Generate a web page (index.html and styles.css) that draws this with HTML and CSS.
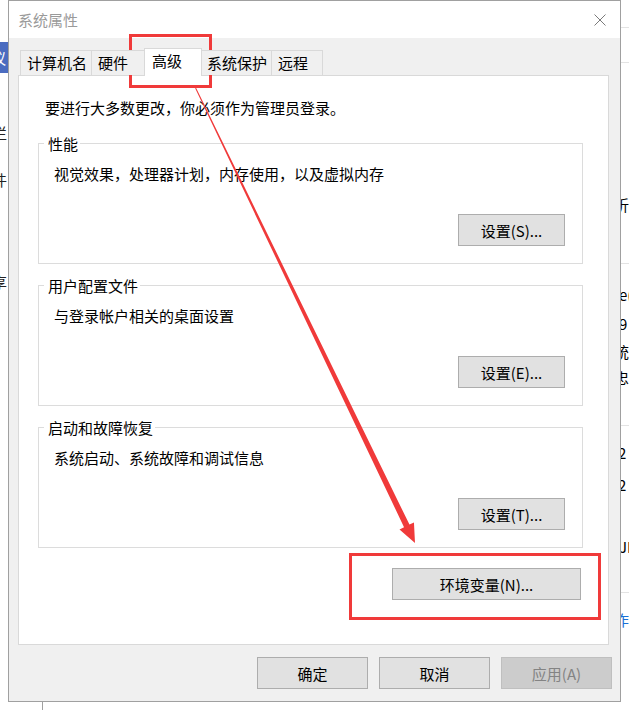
FILE: index.html
```html
<!DOCTYPE html>
<html lang="zh-CN">
<head>
    <meta charset="UTF-8">
    <title>系统属性</title>
    <link rel="stylesheet" href="styles.css">
</head>
<body>
<div class="screen">
    <div class="side side-left">
        <div class="bg-tab">议</div>
        <div class="bg-txt bg-1">栏</div>
        <div class="bg-txt bg-2">件</div>
        <div class="bg-txt bg-3">享</div>
    </div>

    <div class="dialog-col">
        <div class="dialog">
            <div class="titlebar">
                <span class="title">系统属性</span>
                <svg class="close" width="12" height="12" viewBox="0 0 12 12">
                    <path d="M0.5 0.5 L11.5 11.5 M11.5 0.5 L0.5 11.5" stroke="#7a7a7a" stroke-width="1" fill="none"/>
                </svg>
            </div>
            <div class="dlg-body">
                <div class="tabs">
                    <div class="tab tab-name">计算机名</div>
                    <div class="tab tab-hw">硬件</div>
                    <div class="tab active">高级</div>
                    <div class="tab tab-prot">系统保护</div>
                    <div class="tab tab-remote">远程</div>
                </div>
                <div class="panel">
                    <p class="note">要进行大多数更改，你必须作为管理员登录。</p>

                    <fieldset class="group">
                        <legend>性能</legend>
                        <p class="desc">视觉效果，处理器计划，内存使用，以及虚拟内存</p>
                        <div class="actions"><button class="btn">设置(S)...</button></div>
                    </fieldset>

                    <fieldset class="group">
                        <legend>用户配置文件</legend>
                        <p class="desc">与登录帐户相关的桌面设置</p>
                        <div class="actions"><button class="btn">设置(E)...</button></div>
                    </fieldset>

                    <fieldset class="group">
                        <legend>启动和故障恢复</legend>
                        <p class="desc">系统启动、系统故障和调试信息</p>
                        <div class="actions"><button class="btn">设置(T)...</button></div>
                    </fieldset>

                    <div class="env-row"><button class="btn btn-env">环境变量(N)...</button></div>
                </div>
                <div class="footer">
                    <button class="btn btn-foot">确定</button>
                    <button class="btn btn-foot">取消</button>
                    <button class="btn btn-foot" disabled>应用(A)</button>
                </div>
            </div>
        </div>
        <div class="below"></div>
    </div>

    <div class="side side-right">
        <div class="rl rl-1"></div>
        <div class="rl rl-2"></div>
        <div class="rt rt-1">折</div>
        <div class="rl rl-3"></div>
        <div class="rt rt-2">e(</div>
        <div class="rt rt-3">9</div>
        <div class="rt rt-4">统</div>
        <div class="rt rt-5">忠</div>
        <div class="rl rl-4"></div>
        <div class="rt rt-6">2</div>
        <div class="rt rt-7">2</div>
        <div class="rt rt-8">JI</div>
        <div class="rl rl-5"></div>
        <div class="rt rt-9">作</div>
    </div>
</div>

<!-- annotation marks drawn over the screenshot -->
<svg class="marks" width="629" height="710" viewBox="0 0 629 710">
    <rect x="130.5" y="35.5" width="80" height="51" fill="none" stroke="#f03a3a" stroke-width="3"/>
    <rect x="350.5" y="554.5" width="249" height="64" fill="none" stroke="#f03a3a" stroke-width="3"/>
    <polygon fill="#f03a3a" points="196.05,87.78 409.45,524.6 413.96,522.4 415,543 399.5,529.4 404.05,527.2 195.15,88.22"/>
</svg>
</body>
</html>
```

FILE: styles.css
```css
body{
    margin:0px;
    width:629px;
    height:710px;
    overflow:hidden;
    background-color:#ffffff;
    font-family:"Noto Sans CJK SC", "Noto Sans", sans-serif;
    font-size:15px;
    color:#000000;
    position:relative;
}
.screen{
    display:flex;
    align-items:flex-start;
    height:710px;
}

/* windows behind the dialog */
.side{
    width:8px;
    height:710px;
    overflow:hidden;
    display:flex;
    flex-direction:column;
    flex-shrink:0;
}
.bg-tab{
    margin-top:42px;
    height:31px;
    line-height:31px;
    background-color:#4b6cc0;
    color:#ffffff;
    text-indent:-9px;
    white-space:nowrap;
}
.bg-txt{
    line-height:20px;
    text-indent:-8px;
    white-space:nowrap;
    color:#222222;
}
.bg-1{ margin-top:50px; }
.bg-2{ margin-top:27px; }
.bg-3{ margin-top:82px; }

.rl{
    height:1px;
    background-color:#e3e3e3;
    flex-shrink:0;
}
.rl-1{ margin-top:27px; }
.rl-2{ margin-top:34px; }
.rl-3{ margin-top:48px; }
.rl-4{ margin-top:37px; }
.rl-5{ margin-top:35px; }
.rt{
    line-height:20px;
    white-space:nowrap;
    flex-shrink:0;
}
.rt-1{ margin-top:132px; text-indent:-7px; }
.rt-2{ margin-top:21px; text-indent:-2px; }
.rt-3{ margin-top:9px; text-indent:-2px; }
.rt-4{ margin-top:8px; text-indent:-7px; }
.rt-5{ margin-top:6px; text-indent:-7px; }
.rt-6{ margin-top:17px; text-indent:-3px; }
.rt-7{ margin-top:12px; text-indent:-3px; }
.rt-8{ margin-top:42px; text-indent:-2px; }
.rt-9{ margin-top:17px; text-indent:-7px; color:#1a6fd6; }

.dialog-col{
    width:613px;
    flex-shrink:0;
}
.below{
    height:8px;
    margin-left:34px;
    border-left:1px solid #a0a0a0;
}

/* dialog */
.dialog{
    width:613px;
    height:702px;
    box-sizing:border-box;
    border:1px solid #a0a0a0;
    background-color:#f0f0f0;
    display:flex;
    flex-direction:column;
}
.titlebar{
    height:37px;
    background-color:#ffffff;
    display:flex;
    align-items:center;
    justify-content:space-between;
    padding:0px 14px 0px 9px;
    flex-shrink:0;
}
.title{
    color:#9a9a9a;
    line-height:20px;
    margin-top:1px;
}
.close{
    display:block;
    margin-top:1px;
}

.tabs{
    display:flex;
    align-items:flex-end;
    height:28px;
    margin-top:10px;
    margin-bottom:-1px;
    padding-left:11px;
    position:relative;
    z-index:1;
}
.tab{
    height:25px;
    margin-bottom:1px;
    box-sizing:border-box;
    border:1px solid #d9d9d9;
    border-bottom:0px;
    background-color:#f0f0f0;
    padding-left:6px;
    line-height:24px;
    white-space:nowrap;
}
.tab + .tab{
    margin-left:-1px;
}
.tab-name{ width:72px; }
.tab-hw{ width:55px; }
.tab-prot{ width:72px; }
.tab-remote{ width:52px; }
.tab.active{
    width:58px;
    height:28px;
    margin:0px -1px 0px -2px;
    padding-left:7px;
    line-height:23px;
    background-color:#ffffff;
    position:relative;
}

.panel{
    height:570px;
    box-sizing:border-box;
    margin:0px 11px 0px 9px;
    border:1px solid #d9d9d9;
    background-color:#ffffff;
    padding:22px 25px 0px 19px;
    position:relative;
}
.note{
    margin:0px 0px 0px 7px;
    line-height:20px;
}

.group{
    margin:12px 0px 0px 0px;
    padding:11px 17px 17px 15px;
    border:1px solid #dcdcdc;
    min-width:0px;
}
.note + .group{
    margin-top:16px;
}
.group legend{
    margin-left:-10px;
    padding:0px 2px 0px 4px;
    line-height:19px;
}
.desc{
    margin:0px;
    line-height:20px;
}
.actions{
    display:flex;
    justify-content:flex-end;
    margin-top:30px;
}

.btn{
    width:107px;
    height:32px;
    box-sizing:border-box;
    padding:0px;
    border:1px solid #adadad;
    background-color:#e1e1e1;
    font-family:inherit;
    font-size:15px;
    color:#000000;
}
.btn:disabled{
    background-color:#cccccc;
    border-color:#bfbfbf;
    color:#838383;
}
.env-row{
    display:flex;
    justify-content:flex-end;
    margin-top:20px;
    padding-right:2px;
}
.btn-env{
    width:189px;
}

.footer{
    display:flex;
    justify-content:flex-end;
    gap:11px;
    margin-top:12px;
    padding-right:8px;
}
.btn-foot{
    width:111px;
}

.marks{
    position:absolute;
    top:0px;
    left:0px;
    pointer-events:none;
}
```
